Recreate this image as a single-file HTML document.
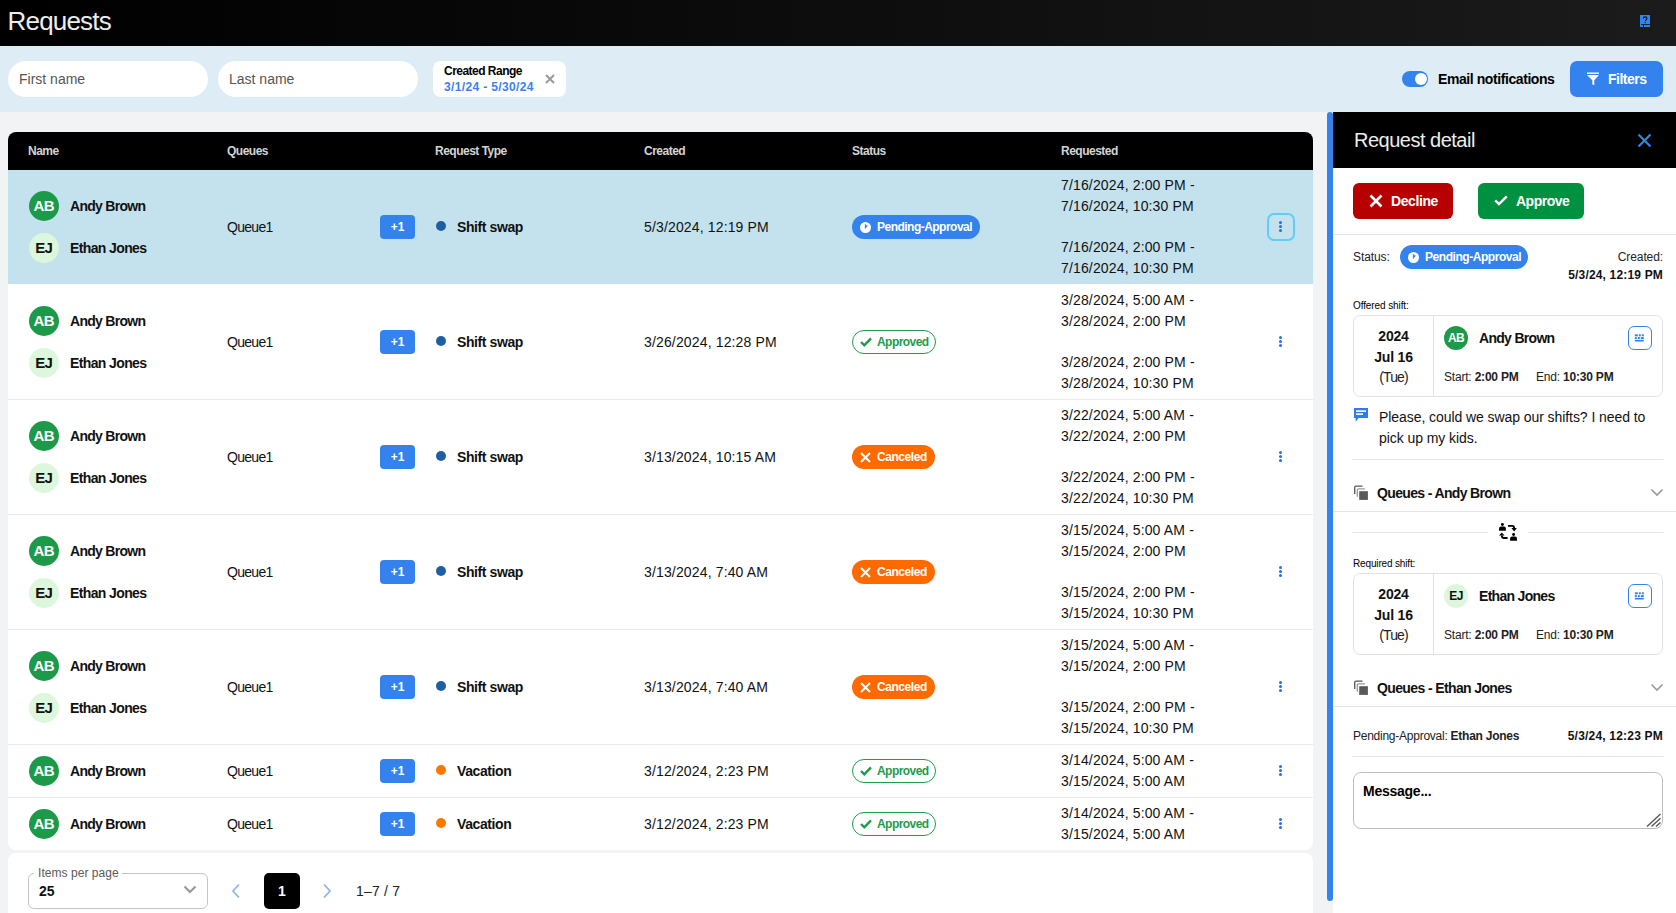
<!DOCTYPE html>
<html><head><meta charset="utf-8"><title>Requests</title>
<style>
*{box-sizing:border-box;margin:0;padding:0}
html,body{width:1676px;height:913px;overflow:hidden}
body{font-family:"Liberation Sans",sans-serif;background:#f1f3f5;position:relative;color:#111}
.abs{position:absolute}
.t{position:absolute;white-space:nowrap;line-height:1}
#hdr{left:0;top:0;width:1676px;height:46px;background:linear-gradient(90deg,#000 0%,#0a0a0a 40%,#1b1b1b 100%)}
#bar{left:0;top:46px;width:1676px;height:66px;background:#deecf6}
.inp{background:#fff;border-radius:18px;height:36px;top:61px;width:200px}
.chip{background:#fff;border-radius:8px}
#tbl{left:8px;top:132px;width:1305px;height:718px;background:#fff;border-radius:8px;overflow:hidden}
#thead{left:0;top:0;width:1305px;height:38px;background:#000}
.th{color:#d4d4d4;font-size:12px;font-weight:bold;top:13px;letter-spacing:-0.5px}
.row{position:absolute;left:0;width:1305px;border-bottom:1px solid #ebebeb}
.av{position:absolute;width:30px;height:30px;border-radius:50%;text-align:center;line-height:30px;font-size:15px;font-weight:bold;letter-spacing:-0.6px;text-indent:-0.6px}
.ab{background:#1c9a4a;color:#fff}
.ej{background:#dcf7dc;color:#111}
.nm{font-size:14px;font-weight:bold;letter-spacing:-0.3px}
.reg{font-size:14px}
.badge{position:absolute;width:35px;height:24px;background:#3482ed;border-radius:4px;color:#fff;font-size:12px;font-weight:bold;text-align:center;line-height:24px}
.dot{position:absolute;width:10px;height:10px;border-radius:50%}
.st{position:absolute;height:24px;border-radius:12px;font-size:12px;font-weight:bold;line-height:24px;letter-spacing:-0.35px}
.menu{position:absolute;width:3px;height:3px;border-radius:50%;background:#2a6ee8;box-shadow:0 4px 0 #2a6ee8,0 8px 0 #2a6ee8}
</style></head>
<body>
<div id="hdr" class="abs">
  <div class="t" style="left:7.5px;top:7.5px;font-size:26px;color:#ededed;letter-spacing:-0.8px">Requests</div>
  <svg class="abs" style="left:1638px;top:14px" width="14" height="14" viewBox="0 0 14 14">
    <rect x="2" y="1" width="10" height="12" fill="#2f86f0"/>
    <path d="M5.3 4.6c0-1 .8-1.7 1.8-1.7s1.8.7 1.8 1.6c0 1.2-1.4 1.2-1.4 2.5" stroke="#111" stroke-width="1.1" fill="none"/>
    <rect x="6.7" y="7.9" width="1.1" height="1.1" fill="#111"/>
    <rect x="3" y="10.2" width="9" height="0.9" fill="#111"/><rect x="5" y="10.5" width="1" height="2.5" fill="#111"/>
  </svg>
</div>
<div id="bar" class="abs">
  <div class="abs inp" style="left:8px;top:15px"><div class="t" style="left:11px;top:11px;font-size:14px;color:#555">First name</div></div>
  <div class="abs inp" style="left:218px;top:15px"><div class="t" style="left:11px;top:11px;font-size:14px;color:#555">Last name</div></div>
  <div class="abs chip" style="left:433px;top:15px;width:133px;height:36px">
    <div class="t" style="left:11px;top:4px;font-size:12px;font-weight:bold;color:#000;letter-spacing:-0.52px">Created Range</div>
    <div class="t" style="left:11px;top:20px;font-size:12px;font-weight:bold;color:#3b82f0;letter-spacing:0.36px">3/1/24 - 5/30/24</div>
    <svg class="abs" style="left:112px;top:13px" width="10" height="10" viewBox="0 0 10 10"><path d="M1 1L9 9M9 1L1 9" stroke="#9a9a9a" stroke-width="2"/></svg>
  </div>
  <div class="abs" style="left:1402px;top:25px;width:26px;height:16px;border-radius:8px;background:#3482ed"></div>
  <div class="abs" style="left:1415px;top:27px;width:12px;height:12px;border-radius:50%;background:#fff"></div>
  <div class="t" style="left:1438px;top:26px;font-size:14px;font-weight:bold;color:#000;letter-spacing:-0.42px">Email notifications</div>
  <div class="abs" style="left:1570px;top:15px;width:93px;height:36px;border-radius:7px;background:#3482ed"></div>
  <svg class="abs" style="left:1586px;top:26px" width="14" height="14" viewBox="0 0 14 14">
    <rect x="1" y="0.5" width="12" height="1.4" fill="#fff"/>
    <path d="M1 3H13L8.3 8.2V13.3L6.3 12.3V8.2Z" fill="#fff"/>
  </svg>
  <div class="t" style="left:1608px;top:26px;font-size:14px;font-weight:bold;color:#fff;letter-spacing:-0.5px">Filters</div>
</div>

<div id="tbl" class="abs">
  <div id="thead" class="abs">
    <div class="t th" style="left:20px">Name</div>
    <div class="t th" style="left:219px">Queues</div>
    <div class="t th" style="left:427px">Request Type</div>
    <div class="t th" style="left:636px">Created</div>
    <div class="t th" style="left:844px">Status</div>
    <div class="t th" style="left:1053px">Requested</div>
  </div>
  <div class="row" style="top:38px;height:115px;background:#c4e2ee;border-bottom-color:#fff;"></div>
<div class="av ab" style="left:21px;top:59px">AB</div>
<div class="av ej" style="left:21px;top:101px">EJ</div>
<div class="t" style="left:62px;top:67.25px;font-size:14px;font-weight:bold;color:#111;letter-spacing:-0.72px;">Andy Brown</div>
<div class="t" style="left:62px;top:109.25px;font-size:14px;font-weight:bold;color:#111;letter-spacing:-0.62px;">Ethan Jones</div>
<div class="t" style="left:219px;top:88.25px;font-size:14px;color:#111;letter-spacing:-0.7px;">Queue1</div>
<div class="badge" style="left:372px;top:83px">+1</div>
<div class="dot" style="left:428px;top:88.5px;background:#1e5fa3"></div>
<div class="t" style="left:449px;top:88.25px;font-size:14px;font-weight:bold;color:#111;letter-spacing:-0.4px;">Shift swap</div>
<div class="t" style="left:636px;top:88.25px;font-size:14px;color:#111;letter-spacing:0.15px;">5/3/2024, 12:19 PM</div>
<div class="st" style="left:844px;top:83px;width:128px;background:#3482ed"></div><svg class="abs" style="left:852px;top:89.5px" width="11" height="11" viewBox="0 0 11 11"><circle cx="5.5" cy="5.5" r="5.5" fill="#fff"/><path d="M5.5 2.2V5.5L7.3 3.4" stroke="#3482ed" stroke-width="1.3" fill="none"/></svg><div class="t" style="left:869px;top:89.22px;font-size:12px;font-weight:bold;color:#fff;letter-spacing:-0.52px;">Pending-Approval</div>
<div class="t" style="left:1053px;top:46.25px;font-size:14px;color:#111;letter-spacing:0.15px;">7/16/2024, 2:00 PM -</div>
<div class="t" style="left:1053px;top:67.25px;font-size:14px;color:#111;letter-spacing:0.15px;">7/16/2024, 10:30 PM</div>
<div class="t" style="left:1053px;top:108.25px;font-size:14px;color:#111;letter-spacing:0.15px;">7/16/2024, 2:00 PM -</div>
<div class="t" style="left:1053px;top:129.25px;font-size:14px;color:#111;letter-spacing:0.15px;">7/16/2024, 10:30 PM</div>
<div class="abs" style="left:1259px;top:81px;width:28px;height:28px;border:2px solid #62cdf7;border-radius:7px"></div>
<div class="menu" style="left:1271.2px;top:89px"></div>
<div class="row" style="top:153px;height:115px;background:#fff;"></div>
<div class="av ab" style="left:21px;top:174px">AB</div>
<div class="av ej" style="left:21px;top:216px">EJ</div>
<div class="t" style="left:62px;top:182.25px;font-size:14px;font-weight:bold;color:#111;letter-spacing:-0.72px;">Andy Brown</div>
<div class="t" style="left:62px;top:224.25px;font-size:14px;font-weight:bold;color:#111;letter-spacing:-0.62px;">Ethan Jones</div>
<div class="t" style="left:219px;top:203.25px;font-size:14px;color:#111;letter-spacing:-0.7px;">Queue1</div>
<div class="badge" style="left:372px;top:198px">+1</div>
<div class="dot" style="left:428px;top:203.5px;background:#1e5fa3"></div>
<div class="t" style="left:449px;top:203.25px;font-size:14px;font-weight:bold;color:#111;letter-spacing:-0.4px;">Shift swap</div>
<div class="t" style="left:636px;top:203.25px;font-size:14px;color:#111;letter-spacing:0.15px;">3/26/2024, 12:28 PM</div>
<div class="st" style="left:844px;top:198px;width:84px;border:1px solid #1f9b4c"></div><svg class="abs" style="left:852px;top:205px" width="12" height="10" viewBox="0 0 12 10"><path d="M1 5L4.3 8.3L11 1.3" stroke="#1f9b4c" stroke-width="2.4" fill="none"/></svg><div class="t" style="left:869px;top:204.22px;font-size:12px;font-weight:bold;color:#1f9b4c;letter-spacing:-0.55px;">Approved</div>
<div class="t" style="left:1053px;top:161.25px;font-size:14px;color:#111;letter-spacing:0.15px;">3/28/2024, 5:00 AM -</div>
<div class="t" style="left:1053px;top:182.25px;font-size:14px;color:#111;letter-spacing:0.15px;">3/28/2024, 2:00 PM</div>
<div class="t" style="left:1053px;top:223.25px;font-size:14px;color:#111;letter-spacing:0.15px;">3/28/2024, 2:00 PM -</div>
<div class="t" style="left:1053px;top:244.25px;font-size:14px;color:#111;letter-spacing:0.15px;">3/28/2024, 10:30 PM</div>
<div class="menu" style="left:1271.2px;top:204px"></div>
<div class="row" style="top:268px;height:115px;background:#fff;"></div>
<div class="av ab" style="left:21px;top:289px">AB</div>
<div class="av ej" style="left:21px;top:331px">EJ</div>
<div class="t" style="left:62px;top:297.25px;font-size:14px;font-weight:bold;color:#111;letter-spacing:-0.72px;">Andy Brown</div>
<div class="t" style="left:62px;top:339.25px;font-size:14px;font-weight:bold;color:#111;letter-spacing:-0.62px;">Ethan Jones</div>
<div class="t" style="left:219px;top:318.25px;font-size:14px;color:#111;letter-spacing:-0.7px;">Queue1</div>
<div class="badge" style="left:372px;top:313px">+1</div>
<div class="dot" style="left:428px;top:318.5px;background:#1e5fa3"></div>
<div class="t" style="left:449px;top:318.25px;font-size:14px;font-weight:bold;color:#111;letter-spacing:-0.4px;">Shift swap</div>
<div class="t" style="left:636px;top:318.25px;font-size:14px;color:#111;letter-spacing:0.15px;">3/13/2024, 10:15 AM</div>
<div class="st" style="left:844px;top:313px;width:83px;background:#ff6a00"></div><svg class="abs" style="left:852px;top:319.5px" width="11" height="11" viewBox="0 0 11 11"><path d="M1 1L10 10M10 1L1 10" stroke="#fff" stroke-width="2.1" fill="none"/></svg><div class="t" style="left:869px;top:319.22px;font-size:12px;font-weight:bold;color:#fff;letter-spacing:-0.45px;">Canceled</div>
<div class="t" style="left:1053px;top:276.25px;font-size:14px;color:#111;letter-spacing:0.15px;">3/22/2024, 5:00 AM -</div>
<div class="t" style="left:1053px;top:297.25px;font-size:14px;color:#111;letter-spacing:0.15px;">3/22/2024, 2:00 PM</div>
<div class="t" style="left:1053px;top:338.25px;font-size:14px;color:#111;letter-spacing:0.15px;">3/22/2024, 2:00 PM -</div>
<div class="t" style="left:1053px;top:359.25px;font-size:14px;color:#111;letter-spacing:0.15px;">3/22/2024, 10:30 PM</div>
<div class="menu" style="left:1271.2px;top:319px"></div>
<div class="row" style="top:383px;height:115px;background:#fff;"></div>
<div class="av ab" style="left:21px;top:404px">AB</div>
<div class="av ej" style="left:21px;top:446px">EJ</div>
<div class="t" style="left:62px;top:412.25px;font-size:14px;font-weight:bold;color:#111;letter-spacing:-0.72px;">Andy Brown</div>
<div class="t" style="left:62px;top:454.25px;font-size:14px;font-weight:bold;color:#111;letter-spacing:-0.62px;">Ethan Jones</div>
<div class="t" style="left:219px;top:433.25px;font-size:14px;color:#111;letter-spacing:-0.7px;">Queue1</div>
<div class="badge" style="left:372px;top:428px">+1</div>
<div class="dot" style="left:428px;top:433.5px;background:#1e5fa3"></div>
<div class="t" style="left:449px;top:433.25px;font-size:14px;font-weight:bold;color:#111;letter-spacing:-0.4px;">Shift swap</div>
<div class="t" style="left:636px;top:433.25px;font-size:14px;color:#111;letter-spacing:0.15px;">3/13/2024, 7:40 AM</div>
<div class="st" style="left:844px;top:428px;width:83px;background:#ff6a00"></div><svg class="abs" style="left:852px;top:434.5px" width="11" height="11" viewBox="0 0 11 11"><path d="M1 1L10 10M10 1L1 10" stroke="#fff" stroke-width="2.1" fill="none"/></svg><div class="t" style="left:869px;top:434.22px;font-size:12px;font-weight:bold;color:#fff;letter-spacing:-0.45px;">Canceled</div>
<div class="t" style="left:1053px;top:391.25px;font-size:14px;color:#111;letter-spacing:0.15px;">3/15/2024, 5:00 AM -</div>
<div class="t" style="left:1053px;top:412.25px;font-size:14px;color:#111;letter-spacing:0.15px;">3/15/2024, 2:00 PM</div>
<div class="t" style="left:1053px;top:453.25px;font-size:14px;color:#111;letter-spacing:0.15px;">3/15/2024, 2:00 PM -</div>
<div class="t" style="left:1053px;top:474.25px;font-size:14px;color:#111;letter-spacing:0.15px;">3/15/2024, 10:30 PM</div>
<div class="menu" style="left:1271.2px;top:434px"></div>
<div class="row" style="top:498px;height:115px;background:#fff;"></div>
<div class="av ab" style="left:21px;top:519px">AB</div>
<div class="av ej" style="left:21px;top:561px">EJ</div>
<div class="t" style="left:62px;top:527.25px;font-size:14px;font-weight:bold;color:#111;letter-spacing:-0.72px;">Andy Brown</div>
<div class="t" style="left:62px;top:569.25px;font-size:14px;font-weight:bold;color:#111;letter-spacing:-0.62px;">Ethan Jones</div>
<div class="t" style="left:219px;top:548.25px;font-size:14px;color:#111;letter-spacing:-0.7px;">Queue1</div>
<div class="badge" style="left:372px;top:543px">+1</div>
<div class="dot" style="left:428px;top:548.5px;background:#1e5fa3"></div>
<div class="t" style="left:449px;top:548.25px;font-size:14px;font-weight:bold;color:#111;letter-spacing:-0.4px;">Shift swap</div>
<div class="t" style="left:636px;top:548.25px;font-size:14px;color:#111;letter-spacing:0.15px;">3/13/2024, 7:40 AM</div>
<div class="st" style="left:844px;top:543px;width:83px;background:#ff6a00"></div><svg class="abs" style="left:852px;top:549.5px" width="11" height="11" viewBox="0 0 11 11"><path d="M1 1L10 10M10 1L1 10" stroke="#fff" stroke-width="2.1" fill="none"/></svg><div class="t" style="left:869px;top:549.22px;font-size:12px;font-weight:bold;color:#fff;letter-spacing:-0.45px;">Canceled</div>
<div class="t" style="left:1053px;top:506.25px;font-size:14px;color:#111;letter-spacing:0.15px;">3/15/2024, 5:00 AM -</div>
<div class="t" style="left:1053px;top:527.25px;font-size:14px;color:#111;letter-spacing:0.15px;">3/15/2024, 2:00 PM</div>
<div class="t" style="left:1053px;top:568.25px;font-size:14px;color:#111;letter-spacing:0.15px;">3/15/2024, 2:00 PM -</div>
<div class="t" style="left:1053px;top:589.25px;font-size:14px;color:#111;letter-spacing:0.15px;">3/15/2024, 10:30 PM</div>
<div class="menu" style="left:1271.2px;top:549px"></div>
<div class="row" style="top:613px;height:53px;background:#fff;"></div>
<div class="av ab" style="left:21px;top:624px">AB</div>
<div class="t" style="left:62px;top:632.25px;font-size:14px;font-weight:bold;color:#111;letter-spacing:-0.72px;">Andy Brown</div>
<div class="t" style="left:219px;top:632.25px;font-size:14px;color:#111;letter-spacing:-0.7px;">Queue1</div>
<div class="badge" style="left:372px;top:627px">+1</div>
<div class="dot" style="left:428px;top:632.5px;background:#fb7800"></div>
<div class="t" style="left:449px;top:632.25px;font-size:14px;font-weight:bold;color:#111;letter-spacing:-0.4px;">Vacation</div>
<div class="t" style="left:636px;top:632.25px;font-size:14px;color:#111;letter-spacing:0.15px;">3/12/2024, 2:23 PM</div>
<div class="st" style="left:844px;top:627px;width:84px;border:1px solid #1f9b4c"></div><svg class="abs" style="left:852px;top:634px" width="12" height="10" viewBox="0 0 12 10"><path d="M1 5L4.3 8.3L11 1.3" stroke="#1f9b4c" stroke-width="2.4" fill="none"/></svg><div class="t" style="left:869px;top:633.22px;font-size:12px;font-weight:bold;color:#1f9b4c;letter-spacing:-0.55px;">Approved</div>
<div class="t" style="left:1053px;top:621.25px;font-size:14px;color:#111;letter-spacing:0.15px;">3/14/2024, 5:00 AM -</div>
<div class="t" style="left:1053px;top:642.25px;font-size:14px;color:#111;letter-spacing:0.15px;">3/15/2024, 5:00 AM</div>
<div class="menu" style="left:1271.2px;top:633px"></div>
<div class="row" style="top:666px;height:53px;background:#fff;"></div>
<div class="av ab" style="left:21px;top:677px">AB</div>
<div class="t" style="left:62px;top:685.25px;font-size:14px;font-weight:bold;color:#111;letter-spacing:-0.72px;">Andy Brown</div>
<div class="t" style="left:219px;top:685.25px;font-size:14px;color:#111;letter-spacing:-0.7px;">Queue1</div>
<div class="badge" style="left:372px;top:680px">+1</div>
<div class="dot" style="left:428px;top:685.5px;background:#fb7800"></div>
<div class="t" style="left:449px;top:685.25px;font-size:14px;font-weight:bold;color:#111;letter-spacing:-0.4px;">Vacation</div>
<div class="t" style="left:636px;top:685.25px;font-size:14px;color:#111;letter-spacing:0.15px;">3/12/2024, 2:23 PM</div>
<div class="st" style="left:844px;top:680px;width:84px;border:1px solid #1f9b4c"></div><svg class="abs" style="left:852px;top:687px" width="12" height="10" viewBox="0 0 12 10"><path d="M1 5L4.3 8.3L11 1.3" stroke="#1f9b4c" stroke-width="2.4" fill="none"/></svg><div class="t" style="left:869px;top:686.22px;font-size:12px;font-weight:bold;color:#1f9b4c;letter-spacing:-0.55px;">Approved</div>
<div class="t" style="left:1053px;top:674.25px;font-size:14px;color:#111;letter-spacing:0.15px;">3/14/2024, 5:00 AM -</div>
<div class="t" style="left:1053px;top:695.25px;font-size:14px;color:#111;letter-spacing:0.15px;">3/15/2024, 5:00 AM</div>
<div class="menu" style="left:1271.2px;top:686px"></div>
</div>


<div class="abs" style="left:8px;top:853px;width:1305px;height:80px;background:#fff;border-radius:8px"></div>
<div class="abs" style="left:28px;top:873px;width:180px;height:36px;border:1px solid #c4c4c4;border-radius:6px"></div>
<div class="abs" style="left:34px;top:866px;width:88px;height:10px;background:#fff"></div>
<div class="t" style="left:38px;top:866.72px;font-size:12px;color:#5a5a5a;letter-spacing:0.05px;">Items per page</div>
<div class="t" style="left:39px;top:884.25px;font-size:14px;font-weight:bold;color:#111;">25</div>
<svg class="abs" style="left:183px;top:885px" width="14" height="9" viewBox="0 0 14 9"><path d="M1.5 1.5L7 7L12.5 1.5" stroke="#999" stroke-width="2.1" fill="none"/></svg>
<svg class="abs" style="left:231px;top:883px" width="10" height="16" viewBox="0 0 10 16"><path d="M8 1.5L2 8L8 14.5" stroke="#8fb4ee" stroke-width="1.8" fill="none"/></svg>
<div class="abs" style="left:264px;top:873px;width:36px;height:36px;background:#000;border-radius:5px"></div>
<div class="t" style="left:278px;top:884.25px;font-size:14px;font-weight:bold;color:#fff;">1</div>
<svg class="abs" style="left:322px;top:883px" width="10" height="16" viewBox="0 0 10 16"><path d="M2 1.5L8 8L2 14.5" stroke="#8fb4ee" stroke-width="1.8" fill="none"/></svg>
<div class="t" style="left:356px;top:884.25px;font-size:14px;color:#222;letter-spacing:0.2px;">1–7 / 7</div>

<div class="abs" style="left:1313px;top:112px;width:14px;height:801px;background:#f1f3f5"></div>
<div class="abs" style="left:1333px;top:112px;width:343px;height:801px;background:#fff"></div>
<div class="abs" style="left:1327px;top:112px;width:6px;height:789px;background:#3482ed;border-radius:3px"></div>
<div class="abs" style="left:1333px;top:112px;width:343px;height:56px;background:#000"></div>
<div class="t" style="left:1354px;top:130.36px;font-size:20px;color:#ededed;letter-spacing:-0.5px;">Request detail</div>
<svg class="abs" style="left:1637px;top:133px" width="15" height="15" viewBox="0 0 15 15"><path d="M1.5 1.5L13.5 13.5M13.5 1.5L1.5 13.5" stroke="#3482ed" stroke-width="2.2"/></svg>
<div class="abs" style="left:1353px;top:183px;width:100px;height:36px;background:#b70000;border-radius:6px"></div>
<svg class="abs" style="left:1369px;top:194px" width="14" height="14" viewBox="0 0 14 14"><path d="M1.5 1.5L12.5 12.5M12.5 1.5L1.5 12.5" stroke="#fff" stroke-width="2.6"/></svg>
<div class="t" style="left:1391px;top:194.25px;font-size:14px;font-weight:bold;color:#fff;letter-spacing:-0.4px;">Decline</div>
<div class="abs" style="left:1478px;top:183px;width:106px;height:36px;background:#009140;border-radius:6px"></div>
<svg class="abs" style="left:1494px;top:195px" width="14" height="11" viewBox="0 0 14 11"><path d="M1.2 5.3L5 9.1L12.8 1.3" stroke="#fff" stroke-width="2.4" fill="none"/></svg>
<div class="t" style="left:1516px;top:194.25px;font-size:14px;font-weight:bold;color:#fff;letter-spacing:-0.5px;">Approve</div>
<div class="abs" style="left:1333px;top:234px;width:343px;height:1px;background:#e4e4e4"></div>
<div class="t" style="left:1353px;top:251.22px;font-size:12px;color:#222;letter-spacing:-0.1px;">Status:</div>
<div class="abs" style="left:1400px;top:245px;width:128px;height:24px;border-radius:12px;background:#3482ed"></div>
<svg class="abs" style="left:1408px;top:251.5px" width="11" height="11" viewBox="0 0 11 11"><circle cx="5.5" cy="5.5" r="5.5" fill="#fff"/><path d="M5.5 2.2V5.5L7.3 3.4" stroke="#3482ed" stroke-width="1.3" fill="none"/></svg>
<div class="t" style="left:1425px;top:251.22px;font-size:12px;font-weight:bold;color:#fff;letter-spacing:-0.45px;">Pending-Approval</div>
<div class="t" style="right:13px;top:251.22px;font-size:12px;color:#222;letter-spacing:-0.1px;text-align:right">Created:</div>
<div class="t" style="right:13px;top:269.22px;font-size:12px;font-weight:bold;color:#111;letter-spacing:0.17px;text-align:right">5/3/24, 12:19 PM</div>
<div class="t" style="left:1353px;top:300.68px;font-size:10px;color:#000;letter-spacing:-0.1px;">Offered shift:</div>
<div class="abs" style="left:1353px;top:315px;width:310px;height:82px;border:1px solid #e2e2e2;border-radius:7px"></div>
<div class="abs" style="left:1433px;top:315px;width:1px;height:82px;background:#e2e2e2"></div>
<div class="t" style="left:1343.5px;width:100px;text-align:center;top:328.95px;font-size:14px;font-weight:bold;color:#111;letter-spacing:-0.2px;">2024</div>
<div class="t" style="left:1343.5px;width:100px;text-align:center;top:350.25px;font-size:14px;font-weight:bold;color:#111;letter-spacing:-0.2px;">Jul 16</div>
<div class="t" style="left:1343.5px;width:100px;text-align:center;top:370.25px;font-size:14px;color:#222;letter-spacing:-0.9px;">(Tue)</div>
<div class="abs" style="left:1444px;top:326px;width:24px;height:24px;border-radius:50%;background:#1c9a4a;color:#fff;font-size:12px;font-weight:bold;text-align:center;line-height:24px;letter-spacing:-0.6px">AB</div>
<div class="t" style="left:1479px;top:331.25px;font-size:14px;font-weight:bold;color:#111;letter-spacing:-0.7px;">Andy Brown</div>
<div class="abs" style="left:1628px;top:326px;width:24px;height:24px;border:1px solid #3482ed;border-radius:6px"></div><svg class="abs" style="left:1628px;top:326px" width="24" height="24" viewBox="0 0 24 24"><g fill="#3482ed"><rect x="6.8" y="8.3" width="3" height="2"/><rect x="10.8" y="8.3" width="2" height="2"/><rect x="13.8" y="8.3" width="2" height="2"/><rect x="6.8" y="11.1" width="2" height="2"/><rect x="9.8" y="11.1" width="2" height="2"/><rect x="12.8" y="11.1" width="3" height="2"/><rect x="6.8" y="13.9" width="9" height="1.6"/></g></svg>
<div class="t" style="left:1444px;top:371.22px;font-size:12px;color:#222;letter-spacing:-0.2px;">Start: <b>2:00 PM</b></div>
<div class="t" style="left:1536px;top:371.22px;font-size:12px;color:#222;letter-spacing:-0.2px;">End: <b>10:30 PM</b></div>
<svg class="abs" style="left:1354px;top:408px" width="14" height="14" viewBox="0 0 14 14"><path d="M0 0H14V10H4.6L1.6 13.8V10H0Z" fill="#2f7ded"/><rect x="2" y="2.3" width="10" height="1.6" fill="#fff"/><rect x="2" y="5.3" width="7" height="1.6" fill="#fff"/></svg>
<div class="t" style="left:1379px;top:410.25px;font-size:14px;color:#111;letter-spacing:-0.07px;">Please, could we swap our shifts? I need to</div>
<div class="t" style="left:1379px;top:431.25px;font-size:14px;color:#111;letter-spacing:-0.07px;">pick up my kids.</div>
<div class="abs" style="left:1353px;top:459px;width:310px;height:1px;background:#e4e4e4"></div>
<svg class="abs" style="left:1354px;top:485px" width="15" height="16" viewBox="0 0 15 16"><path d="M0.7 9.1V2.6Q0.7 1.1 2.2 1.1H8.5" stroke="#555" stroke-width="1.3" fill="none"/><path d="M3.3 11.7V5.4Q3.3 3.9 4.8 3.9H10.9" stroke="#999" stroke-width="1.3" fill="none"/><rect x="5.2" y="6.2" width="8.7" height="8.7" fill="#5a5a5a"/></svg>
<div class="t" style="left:1377px;top:486.25px;font-size:14px;font-weight:bold;color:#111;letter-spacing:-0.65px;">Queues - Andy Brown</div>
<svg class="abs" style="left:1650px;top:488px" width="14" height="9" viewBox="0 0 14 9"><path d="M1.5 1.5L7 7L12.5 1.5" stroke="#999" stroke-width="1.6" fill="none"/></svg>
<div class="abs" style="left:1333px;top:511px;width:343px;height:1px;background:#e4e4e4"></div>
<div class="abs" style="left:1353px;top:532px;width:135px;height:1px;background:#e4e4e4"></div>
<div class="abs" style="left:1528px;top:532px;width:135px;height:1px;background:#e4e4e4"></div>
<svg class="abs" style="left:1499px;top:523px" width="18" height="18" viewBox="0 0 18 18"><g fill="#000"><circle cx="3.4" cy="1.45" r="1.45"/><path d="M0 7.7V5.4Q0 3.4 2 3.4H4.9Q6.9 3.4 6.9 5.4V7.7Z"/><circle cx="14.6" cy="11.5" r="1.45"/><path d="M11.1 17.7V15.4Q11.1 13.4 13.1 13.4H16Q18 13.4 18 15.4V17.7Z"/><path d="M12.4 5.1H17.9L15.15 8.4Z"/><path d="M0 12.6H5.6L2.8 9.4Z"/></g><path d="M9 2.9H13Q15.15 2.9 15.15 5.3" stroke="#000" stroke-width="1.9" fill="none"/><path d="M8.6 15H4.9Q2.8 15 2.8 12.5" stroke="#000" stroke-width="1.9" fill="none"/></svg>
<div class="t" style="left:1353px;top:558.68px;font-size:10px;color:#000;letter-spacing:-0.15px;">Required shift:</div>
<div class="abs" style="left:1353px;top:573px;width:310px;height:82px;border:1px solid #e2e2e2;border-radius:7px"></div>
<div class="abs" style="left:1433px;top:573px;width:1px;height:82px;background:#e2e2e2"></div>
<div class="t" style="left:1343.5px;width:100px;text-align:center;top:586.95px;font-size:14px;font-weight:bold;color:#111;letter-spacing:-0.2px;">2024</div>
<div class="t" style="left:1343.5px;width:100px;text-align:center;top:608.25px;font-size:14px;font-weight:bold;color:#111;letter-spacing:-0.2px;">Jul 16</div>
<div class="t" style="left:1343.5px;width:100px;text-align:center;top:628.25px;font-size:14px;color:#222;letter-spacing:-0.9px;">(Tue)</div>
<div class="abs" style="left:1444px;top:584px;width:24px;height:24px;border-radius:50%;background:#dcf7dc;color:#111;font-size:12px;font-weight:bold;text-align:center;line-height:24px;letter-spacing:-0.6px">EJ</div>
<div class="t" style="left:1479px;top:589.25px;font-size:14px;font-weight:bold;color:#111;letter-spacing:-0.7px;">Ethan Jones</div>
<div class="abs" style="left:1628px;top:584px;width:24px;height:24px;border:1px solid #3482ed;border-radius:6px"></div><svg class="abs" style="left:1628px;top:584px" width="24" height="24" viewBox="0 0 24 24"><g fill="#3482ed"><rect x="6.8" y="8.3" width="3" height="2"/><rect x="10.8" y="8.3" width="2" height="2"/><rect x="13.8" y="8.3" width="2" height="2"/><rect x="6.8" y="11.1" width="2" height="2"/><rect x="9.8" y="11.1" width="2" height="2"/><rect x="12.8" y="11.1" width="3" height="2"/><rect x="6.8" y="13.9" width="9" height="1.6"/></g></svg>
<div class="t" style="left:1444px;top:629.22px;font-size:12px;color:#222;letter-spacing:-0.2px;">Start: <b>2:00 PM</b></div>
<div class="t" style="left:1536px;top:629.22px;font-size:12px;color:#222;letter-spacing:-0.2px;">End: <b>10:30 PM</b></div>
<svg class="abs" style="left:1354px;top:680px" width="15" height="16" viewBox="0 0 15 16"><path d="M0.7 9.1V2.6Q0.7 1.1 2.2 1.1H8.5" stroke="#555" stroke-width="1.3" fill="none"/><path d="M3.3 11.7V5.4Q3.3 3.9 4.8 3.9H10.9" stroke="#999" stroke-width="1.3" fill="none"/><rect x="5.2" y="6.2" width="8.7" height="8.7" fill="#5a5a5a"/></svg>
<div class="t" style="left:1377px;top:681.25px;font-size:14px;font-weight:bold;color:#111;letter-spacing:-0.62px;">Queues - Ethan Jones</div>
<svg class="abs" style="left:1650px;top:683px" width="14" height="9" viewBox="0 0 14 9"><path d="M1.5 1.5L7 7L12.5 1.5" stroke="#999" stroke-width="1.6" fill="none"/></svg>
<div class="abs" style="left:1333px;top:706px;width:343px;height:1px;background:#e4e4e4"></div>
<div class="t" style="left:1353px;top:730.22px;font-size:12px;color:#222;letter-spacing:-0.25px;">Pending-Approval: <b>Ethan Jones</b></div>
<div class="t" style="right:13px;top:730.22px;font-size:12px;font-weight:bold;color:#111;letter-spacing:0.2px;text-align:right">5/3/24, 12:23 PM</div>
<div class="abs" style="left:1353px;top:756px;width:310px;height:1px;background:#e4e4e4"></div>
<div class="abs" style="left:1353px;top:772px;width:310px;height:57px;border:1px solid #bdbdbd;border-radius:8px"></div>
<div class="t" style="left:1363px;top:784.25px;font-size:14px;font-weight:bold;color:#000;letter-spacing:-0.25px;">Message...</div>
<svg class="abs" style="left:1646px;top:813px" width="15" height="14" viewBox="0 0 15 14"><path d="M1 13.5L14.5 1M5.5 13.5L14.5 5.2M10 13.5L14.5 9.4" stroke="#555" stroke-width="1.3"/></svg>
</body></html>
